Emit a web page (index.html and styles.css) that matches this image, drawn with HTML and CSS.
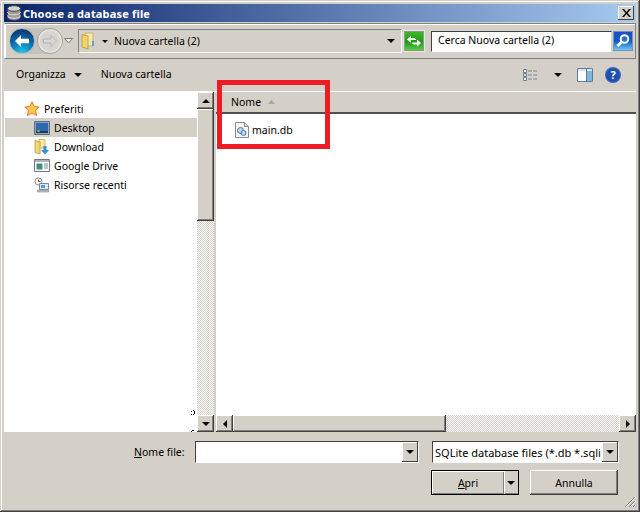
FILE: index.html
```html
<!DOCTYPE html>
<html lang="it">
<head>
<meta charset="utf-8">
<title>Choose a database file</title>
<link rel="stylesheet" href="styles.css">
</head>
<body>
<div class="window">
  <header class="titlebar">
    <svg class="title-icon" width="16" height="16" viewBox="0 0 16 16"><path d="M1.500 3.500v9c0 1.600 3 2.800 6.500 2.800s6.500-1.200 6.500-2.800v-9z" fill="#9c9c9c" stroke="#444"/><ellipse cx="8" cy="3.500" rx="6.500" ry="2.800" fill="#d2d2d2" stroke="#444"/><path d="M1.500 7c0 1.600 3 2.800 6.500 2.800s6.500-1.200 6.500-2.800M1.500 10.500c0 1.600 3 2.800 6.500 2.800s6.500-1.200 6.500-2.800" fill="none" stroke="#e6e6e6"/></svg>
    <span class="title-text">Choose a database file</span>
    <button class="close" aria-label="Chiudi"><svg width="9" height="8" viewBox="0 0 9 8"><path d="M0 0h2l2.500 3 2.500-3h2l-3.500 4 3.500 4h-2l-2.500-3-2.500 3h-2l3.500-4z" fill="#000"/></svg></button>
  </header>

  <div class="navbar">
    <div class="nav-buttons">
      <span class="round back"><svg width="18" height="14" viewBox="0 0 18 14"><path d="M8 1 2 7l6 6V9.200h8V4.800H8z" fill="#fff"/></svg></span>
      <span class="round forward"><svg width="18" height="14" viewBox="0 0 18 14"><path d="M10 1.500 15.500 7 10 12.500V9H2.500V5H10z" fill="#d8d8d8" stroke="#b4b4b4"/></svg></span>
      <svg class="nav-caret" width="9" height="6" viewBox="0 0 9 6"><path d="M.5.500h8L4.500 5z" fill="#e8e8e8" stroke="#7d7d7d"/></svg>
    </div>
    <div class="address">
      <svg class="folder" width="14" height="18" viewBox="0 0 14 18"><path d="M4 1h8v13H4z" fill="#f7e7a5" stroke="#c6ab55" stroke-width=".8"/><path d="M1 2.500l6 1.500v13l-6-2z" fill="#f0d36a" stroke="#b59b45" stroke-width=".8"/><path d="M11 9h2v5h-2z" fill="#5b9fd8"/></svg>
      <i class="caret small"></i>
      <span class="address-text">Nuova cartella (2)</span>
      <i class="caret address-caret"></i>
    </div>
    <span class="refresh"><svg width="16" height="13" viewBox="0 0 16 13"><path d="M1 4.500 5 1v2h3c1 0 2 1 2 2H5v3zM15 8l-4 3.500v-2H8c-1 0-2-1-2-2h5v-3z" fill="#fff"/></svg></span>
    <div class="search"><span>Cerca Nuova cartella (2)</span></div>
    <span class="search-btn"><svg width="16" height="16" viewBox="0 0 16 16"><circle cx="9.500" cy="6" r="3.800" fill="#2a6fd0" stroke="#fff" stroke-width="2"/><path d="M6.500 9 2.500 13" stroke="#fff" stroke-width="3"/></svg></span>
  </div>

  <div class="commandbar">
    <span class="command">Organizza</span>
    <i class="caret command-caret"></i>
    <span class="command new-folder">Nuova cartella</span>
    <span class="command-spacer"></span>
    <svg class="view-icon" width="15" height="13" viewBox="0 0 15 13"><path d="M.5.500h3v3h-3zM.5 4.500h3v3h-3zM.5 8.500h3v3h-3z" fill="#fff" stroke="#6a7f96"/><path d="M5 2h4M10 2h4M5 6h4M10 6h4M5 10h4M10 10h4" stroke="#7d8793"/><path d="M1.500 5.500h1v1h-1z" fill="#d33"/></svg>
    <i class="caret view-caret"></i>
    <svg class="pane-icon" width="16" height="14" viewBox="0 0 16 14"><path d="M.5.500h15v13H.5z" fill="#fff" stroke="#5c7f9e"/><path d="M1 1h14v2H1z" fill="#d6e4ee"/><path d="M10 3h5v10h-5z" fill="#7fb8d8"/><path d="M9.500 1v12" stroke="#5c7f9e"/></svg>
    <span class="help">?</span>
  </div>

  <div class="browser">
    <nav class="sidebar">
      <div class="tree">
        <div class="tree-row favorites">
          <svg width="16" height="16" viewBox="0 0 16 16"><path d="M8 .800l2.200 4.700 5 .600-3.700 3.400 1 5L8 12l-4.500 2.500 1-5L.800 6.100l5-.600z" fill="#fcc84e" stroke="#e8762c"/></svg>
          <span>Preferiti</span>
        </div>
        <div class="tree-row item selected">
          <svg width="16" height="14" viewBox="0 0 16 14"><path d="M.500.500h15v13H.500z" fill="#8ea3b6" stroke="#5c6f82"/><path d="M2 2h12v8H2z" fill="#2f66b5"/><path d="M2 10h12v2H2z" fill="#28384d"/><path d="M3 9h3v2H3z" fill="#5fb04c"/></svg>
          <span>Desktop</span>
        </div>
        <div class="tree-row item">
          <svg width="16" height="16" viewBox="0 0 16 16"><path d="M5 .500h6V9H5z" fill="#f7e7a5" stroke="#c6ab55" stroke-width=".8"/><path d="M1 1.500l5 1.500v12l-5-1.500z" fill="#f1d878" stroke="#b59b45" stroke-width=".8"/><path d="M9.500 7h3v4H15l-4 4.500L7 11h2.500z" fill="#2f8fd8"/></svg>
          <span>Download</span>
        </div>
        <div class="tree-row item">
          <svg width="16" height="13" viewBox="0 0 16 13"><path d="M.500.500h15v12H.500z" fill="#fff" stroke="#707a84"/><path d="M1 1h14v2H1z" fill="#a9b3bd"/><path d="M2.500 4.500h6v6h-6z" fill="#3f8f82"/><path d="M10 5h4M10 7h4M10 9h4" stroke="#7d8793"/></svg>
          <span>Google Drive</span>
        </div>
        <div class="tree-row item">
          <svg width="16" height="16" viewBox="0 0 16 16"><circle cx="4.500" cy="4.500" r="3.500" fill="#fff" stroke="#7d8793"/><path d="M4.500 2.500v2h2" stroke="#555" fill="none"/><path d="M5.500 6.500h9v6h-9z" fill="#dfe6ec" stroke="#7d8793"/><path d="M7 8h4v3H7z" fill="#5c9ad0"/><path d="M3.500 13h11v2h-11z" fill="#b9c3cc" stroke="#7d8793" stroke-width=".6"/></svg>
          <span>Risorse recenti</span>
        </div>
      </div>
      <div class="vscroll">
        <span class="sb-btn"><i class="tri up"></i></span>
        <span class="sb-thumb"></span>
        <span class="sb-track"></span>
        <span class="sb-btn"><i class="tri down"></i></span>
      </div>
      <svg class="glitch" width="6" height="24" viewBox="0 0 6 24"><path d="M0 2h1v1H0zM2 1h1v1H2zM3 2h1v3H3zM2 5h1v1H2zM0 5h1v1H0zM0 22h1v1H0zM1 21h2v1H1z" fill="#000"/></svg>
    </nav>

    <section class="files">
      <div class="file-header"><span>Nome</span><svg width="7" height="4" viewBox="0 0 7 4"><path d="M3.500 0 7 4H0z" fill="#a7a6a0"/></svg></div>
      <div class="file-list">
        <div class="file-row">
          <svg width="14" height="16" viewBox="0 0 14 16"><path d="M.500.500h9l4 4v11H.500z" fill="#f8f8f8" stroke="#8a8a8a"/><path d="M9.500.500v4h4" fill="#ddd" stroke="#8a8a8a"/><circle cx="5.500" cy="8.500" r="3" fill="#bcd8f0" stroke="#4b74a8"/><circle cx="8.500" cy="11" r="2.500" fill="#bcd8f0" stroke="#4b74a8"/></svg>
          <span>main.db</span>
        </div>
      </div>
      <div class="hscroll">
        <span class="sb-btn"><i class="tri left"></i></span>
        <span class="h-thumb"></span>
        <span class="h-track"></span>
        <span class="sb-btn"><i class="tri right"></i></span>
      </div>
    </section>
  </div>

  <footer class="footer">
    <div class="form-row">
      <label class="file-label"><u>N</u>ome file:</label>
      <div class="combo name-combo"><span class="combo-text"></span><span class="combo-btn"><i class="tri down"></i></span></div>
      <div class="combo type-combo"><span class="combo-text">SQLite database files (*.db *.sqli</span><span class="combo-btn"><i class="tri down"></i></span></div>
    </div>
    <div class="actions">
      <div class="split-button"><span class="split-main"><u>A</u>pri</span><span class="split-arrow"><i class="tri down"></i></span></div>
      <button class="cancel">Annulla</button>
    </div>
    <svg class="grip" width="12" height="12" viewBox="0 0 12 12"><path d="M11 1 1 11M11 5 5 11M11 9 9 11" stroke="#808080" stroke-width="1"/><path d="M12 1 2 11M12 5 6 11M12 9l-2 2" stroke="#fff" stroke-width="1"/></svg>
  </footer>
  <div class="annotation"></div>
</div>
</body>
</html>
```
FILE: styles.css
```css
* { box-sizing: border-box; }
html, body { margin: 0; padding: 0; }
body { width: 640px; height: 512px; overflow: hidden; background: #d4d0c8; font-family: "Noto Sans", sans-serif; font-size: 10.5px; color: #000; }
i { display: block; font-style: normal; }
svg { display: block; flex: none; }

.window { position: relative; width: 640px; height: 512px; padding: 4px; display: flex; flex-direction: column; background: #d4d0c8; box-shadow: inset -1px -1px 0 #404040, inset 1px 1px 0 #d4d0c8, inset -2px -2px 0 #808080, inset 2px 2px 0 #fff; }

.titlebar { height: 18px; display: flex; align-items: center; gap: 1px; padding: 0 2px; background: linear-gradient(90deg, #0a246a, #a6caf0); color: #fff; font-weight: bold; font-size: 11px; letter-spacing: .18px; flex: none; }
.title-text { flex: 1; }
.close { width: 16px; height: 14px; padding: 0; margin: 0; border: 0; background: #d4d0c8; display: flex; align-items: center; justify-content: center; box-shadow: inset -1px -1px 0 #404040, inset 1px 1px 0 #fff; }

.navbar { height: 36px; margin-top: 1px; display: flex; align-items: center; flex: none; border: 1px solid; border-color: #808080 #808080 #808080 #fff; box-shadow: inset 1px 1px 0 #fff; padding: 0 2px 0 4px; }
.nav-buttons { display: flex; align-items: center; width: 69px; height: 26px; flex: none; background: linear-gradient(90deg, #d4d0c8 0, #c4c2bd 30%, #c4c2bd 55%, #d4d0c8 62%); }
.round { width: 26px; height: 26px; border-radius: 50%; display: flex; align-items: center; justify-content: center; flex: none; }
.back { background: radial-gradient(circle at 50% 100%, #25c8ee 0, #0a76b4 45%, #0a3f7e 80%); border: 1px solid #b6b6b6; }
.forward { background: radial-gradient(circle at 50% 50%, #d6d4d0 55%, #f4f4f2 75%, #a8a8a8 100%); border: 1px solid #a0a0a0; margin-left: 2px; }
.nav-caret { margin-left: 1px; }
.address { width: 324px; height: 24px; display: flex; align-items: center; border: 1px solid; border-color: #808080 #fff #fff #808080; padding-left: 2px; flex: none; margin-right: 2px; }
.address-text { margin-left: 6px; flex: 1; margin-top: -1px; }
.caret { width: 0; height: 0; border-left: 4px solid transparent; border-right: 4px solid transparent; border-top: 4px solid #000; flex: none; }
.caret.small { border-left-width: 3px; border-right-width: 3px; border-top-width: 3px; margin-left: 7px; }
.address-caret { margin-right: 6px; }
.refresh { width: 20px; height: 20px; background: linear-gradient(#3fb52e, #1f9a16 55%, #5bc84a); border: 1px solid #8aa07c; box-shadow: 0 0 0 1px #e8e6e0; display: flex; align-items: center; justify-content: center; flex: none; margin-right: 7px; }
.search { width: 181px; height: 21px; background: #fff; border: 1px solid; border-color: #404040 #d4d0c8 #fff #404040; padding: 0 6px 2px; display: flex; align-items: center; flex: none; }
.search-btn { width: 20px; height: 20px; background: linear-gradient(#1a50c8, #1058c8 50%, #6fc8f4); border: 1px solid #7a94b8; display: flex; align-items: center; justify-content: center; flex: none; margin-left: 1px; }

.commandbar { height: 33px; display: flex; align-items: center; padding: 0 15px 0 12px; border-bottom: 1px solid #fff; flex: none; }
.command { margin-top: -2px; }
.command-caret { margin-left: 8px; }
.new-folder { margin-left: 19px; }
.command-spacer { flex: 1; }
.view-caret { margin-left: 16px; }
.pane-icon { margin-left: 15px; }
.help { width: 16px; height: 16px; border-radius: 50%; margin-left: 12px; background: radial-gradient(circle, #1f4fb0 55%, #8ea6c8); color: #fff; font-weight: bold; font-size: 11px; line-height: 16px; text-align: center; }

.browser { flex: 1; min-height: 0; display: flex; }
.sidebar { position: relative; width: 210px; display: flex; flex: none; background: #fff; }
.tree { flex: 1; padding: 7px 0 0 1px; }
.tree-row { height: 19px; display: flex; align-items: center; }
.favorites { padding-left: 19px; gap: 4px; }
.item { padding-left: 29px; gap: 4px; }
.selected { background: #d4d0c8; }
.vscroll { width: 17px; display: flex; flex-direction: column; flex: none; background: #d4d0c8; }
.sb-btn { width: 17px; height: 17px; background: #d4d0c8; display: flex; align-items: center; justify-content: center; flex: none; box-shadow: inset -1px -1px 0 #404040, inset 1px 1px 0 #fff, inset -2px -2px 0 #808080; }
.sb-thumb { height: 112px; flex: none; background: #d4d0c8; box-shadow: inset -1px -1px 0 #404040, inset 1px 1px 0 #fff, inset -2px -2px 0 #808080; }
.sb-track { flex: 1; background: repeating-conic-gradient(#fff 0 25%, #d4d0c8 0 50%) 0 0 / 2px 2px; }
.glitch { position: absolute; left: 187px; bottom: -1px; }
.tri { width: 0; height: 0; border: 4px solid transparent; }
.tri.up { border-top: 0; border-bottom-color: #000; }
.tri.down { border-bottom: 0; border-top-color: #000; }
.tri.left { border-left: 0; border-right-color: #000; }
.tri.right { border-right: 0; border-left-color: #000; }

.files { flex: 1; min-width: 0; display: flex; flex-direction: column; margin-left: 2px; background: #fff; }
.file-header { height: 22px; display: flex; align-items: center; gap: 7px; padding: 0 0 1px 15px; background: #d4d0c8; border-bottom: 2px solid #505050; flex: none; }
.file-list { flex: 1; padding-top: 7px; }
.file-row { display: flex; align-items: center; gap: 3px; padding-left: 19px; height: 18px; }
.hscroll { height: 17px; display: flex; flex: none; }
.h-thumb { width: 213px; flex: none; background: #d4d0c8; box-shadow: inset -1px -1px 0 #404040, inset 1px 1px 0 #fff, inset -2px -2px 0 #808080; }
.h-track { flex: 1; background: repeating-conic-gradient(#fff 0 25%, #d4d0c8 0 50%) 0 0 / 2px 2px; }

.footer { position: relative; height: 76px; flex: none; padding-top: 9px; }
.form-row { display: flex; align-items: center; height: 22px; }
.file-label { margin-left: 130px; width: 60px; }
.combo { height: 22px; display: flex; align-items: center; background: #fff; border: 1px solid; border-color: #404040 #fff #fff #404040; overflow: hidden; flex: none; }
.name-combo { width: 224px; margin-left: 1px; }
.type-combo { width: 187px; margin-left: 13px; }
.combo-text { flex: 1; min-width: 0; white-space: nowrap; overflow: hidden; padding-left: 2px; font-size: 11px; }
.combo-btn { width: 16px; height: 20px; background: #d4d0c8; display: flex; align-items: center; justify-content: center; flex: none; box-shadow: inset -1px -1px 0 #404040, inset 1px 1px 0 #fff; }
.actions { display: flex; gap: 11px; margin: 7px 0 0 427px; }
.split-button { width: 88px; height: 25px; display: flex; border: 1px solid #000; background: #d4d0c8; }
.split-main { flex: 1; display: flex; align-items: center; justify-content: center; box-shadow: inset 1px 1px 0 #fff, inset -1px -1px 0 #808080; }
.split-arrow { width: 14px; display: flex; align-items: center; justify-content: center; box-shadow: inset 1px 0 0 #fff, inset 0 -1px 0 #808080; }
.cancel { width: 88px; height: 25px; padding: 0; background: #d4d0c8; border: 0; font: inherit; color: #000; box-shadow: inset -1px -1px 0 #404040, inset 1px 1px 0 #fff, inset -2px -2px 0 #808080; }
.grip { position: absolute; right: 0; bottom: 0; }

.annotation { position: absolute; left: 217px; top: 80px; width: 113px; height: 69px; border: 5px solid #ed1c24; pointer-events: none; }
```
